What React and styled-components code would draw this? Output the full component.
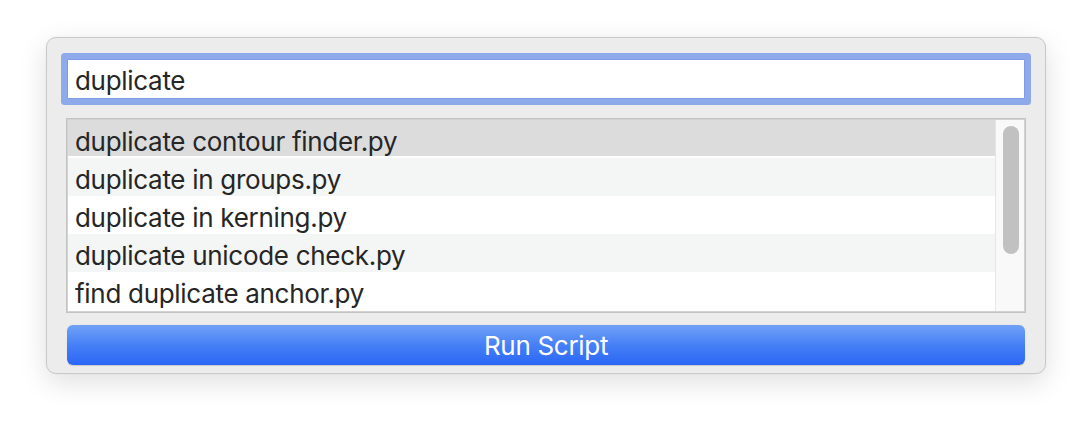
import React from "react";
import styled, { createGlobalStyle } from "styled-components";

const Global = createGlobalStyle`
  html, body { margin: 0; padding: 0; background: #ffffff; }
  body { font-family: Inter, "Liberation Sans", sans-serif; -webkit-font-smoothing: antialiased; }
  * { box-sizing: border-box; }
`;

const Page = styled.div`
  width: 1092px;
  height: 428px;
  padding: 37px 0 0 46px;
`;

const Panel = styled.div`
  width: 1000px;
  height: 337px;
  background: #ececec;
  border: 1px solid #c9c9c9;
  border-radius: 10px;
  box-shadow: 0 8px 28px rgba(0, 0, 0, 0.13), 0 0 2px rgba(0, 0, 0, 0.05);
  padding: 21px 19px 0 19px;
  display: flex;
  flex-direction: column;
`;

const SearchField = styled.div`
  margin: 0 1px;
  height: 40px;
  background: #ffffff;
  border: 1px solid #7c9de6;
  border-radius: 1px;
  box-shadow: 0 0 0 6px #8eaaeb;
  display: flex;
  align-items: center;
  padding: 2px 0 0 7px;
  font-size: 26px;
  letter-spacing: -0.3px;
  color: #262626;
`;

const List = styled.div`
  margin-top: 19px;
  height: 195px;
  background: #ffffff;
  border: 1px solid #c3c3c3;
  box-shadow: inset 0 0 0 1px #d2d2d2;
  display: flex;
  padding: 1px;
`;

const Rows = styled.div`
  flex: 1;
  display: flex;
  flex-direction: column;
  overflow: hidden;
`;

const Row = styled.div`
  height: 38px;
  flex: none;
  display: flex;
  align-items: center;
  padding: 4px 0 0 7px;
  font-size: 26px;
  letter-spacing: -0.3px;
  color: #262626;
  background: ${(p) =>
    p.$selected
      ? "linear-gradient(#dcdcdc 0, #dcdcdc 36px, #ffffff 36px)"
      : p.$odd
      ? "#f4f5f5"
      : "#ffffff"};
`;

const Track = styled.div`
  width: 29px;
  flex: none;
  background: #f9f9f9;
  border-left: 1px solid #e6e6e6;
  padding: 6px 0 0 7px;
`;

const Thumb = styled.div`
  width: 16px;
  height: 128px;
  border-radius: 8px;
  background: #c1c1c1;
`;

const RunButton = styled.button`
  margin: 12px 1px 0 1px;
  height: 40px;
  border: none;
  border-radius: 6px;
  background: linear-gradient(#71a1f6, #4680f6 50%, #2a66f6);
  color: #ffffff;
  font-family: Inter, "Liberation Sans", sans-serif;
  font-size: 26px;
  letter-spacing: -0.3px;
  padding: 0;
  box-shadow: 0 0.5px 1px rgba(0, 0, 0, 0.15);
`;

const items = [
  "duplicate contour finder.py",
  "duplicate in groups.py",
  "duplicate in kerning.py",
  "duplicate unicode check.py",
  "find duplicate anchor.py",
];

export default function App() {
  return (
    <Page>
      <Global />
      <Panel>
        <SearchField>duplicate</SearchField>
        <List>
          <Rows>
            {items.map((t, i) => (
              <Row key={t} $selected={i === 0} $odd={i % 2 === 1}>
                {t}
              </Row>
            ))}
          </Rows>
          <Track>
            <Thumb />
          </Track>
        </List>
        <RunButton>Run Script</RunButton>
      </Panel>
    </Page>
  );
}
